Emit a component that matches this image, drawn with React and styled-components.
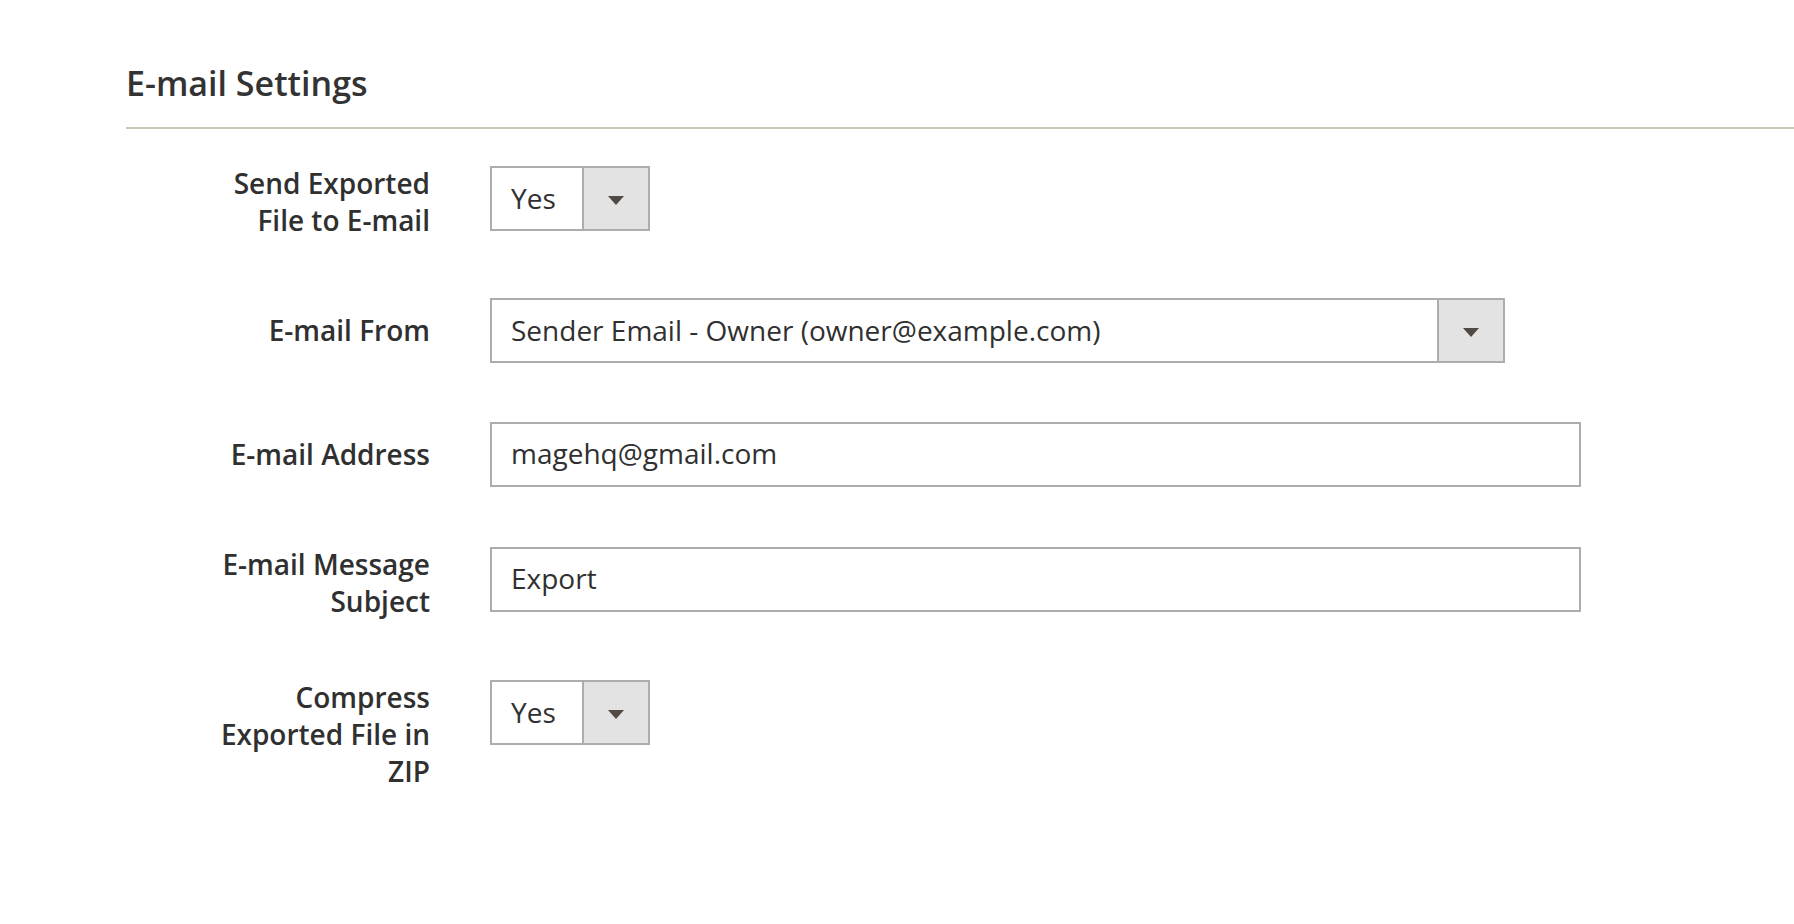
import React from 'react'
import styled, { createGlobalStyle } from 'styled-components'

const GlobalStyle = createGlobalStyle`
  html, body {
    margin: 0;
    padding: 0;
    background: #ffffff;
  }
  body {
    font-family: "Open Sans", "Liberation Sans", Arial, sans-serif;
    color: #303030;
  }
`

const Page = styled.div`
  width: 1794px;
  min-height: 924px;
  box-sizing: border-box;
  padding: 63px 0 0 126px;
`

const Legend = styled.div`
  border-bottom: 2px solid #ccc5b9;
  padding-bottom: 23px;
  margin-bottom: 36px;
`

const Title = styled.h2`
  margin: 0;
  font-size: 34px;
  line-height: 41px;
  font-weight: 600;
  color: #333333;
`

const Fields = styled.div`
  display: flex;
  flex-direction: column;
  gap: 59px;
`

const Row = styled.div`
  display: flex;
  align-items: flex-start;
`

const Label = styled.label`
  width: 240px;
  margin-left: 64px;
  margin-right: 60px;
  padding-top: ${(props) => (props.$single ? '14px' : '0')};
  text-align: right;
  font-size: 28px;
  line-height: 37px;
  font-weight: 600;
  color: #303030;
`

const Control = styled.div`
  padding-top: ${(props) => (props.$single ? '0' : '1px')};
`

const SelectBox = styled.div`
  display: flex;
  width: ${(props) => props.$width}px;
  height: 65px;
  box-sizing: border-box;
  border: 2px solid #adadad;
  background: #ffffff;
`

const SelectValue = styled.div`
  flex: 1;
  display: flex;
  align-items: center;
  padding: 0 19px 2px 19px;
  font-size: 28px;
  color: #303030;
  white-space: nowrap;
`

const SelectArrow = styled.div`
  width: 66px;
  border-left: 2px solid #adadad;
  background: #e3e3e3;
  display: flex;
  align-items: center;
  justify-content: center;
  padding-top: 3px;
  box-sizing: border-box;
`

const TextInput = styled.input`
  display: block;
  width: ${(props) => props.$width}px;
  height: 65px;
  box-sizing: border-box;
  border: 2px solid #adadad;
  border-radius: 0;
  padding: 0 19px 3px 19px;
  margin: 0;
  font-family: "Open Sans", "Liberation Sans", Arial, sans-serif;
  font-size: 28px;
  color: #303030;
  background: #ffffff;
  outline: none;
`

function Arrow() {
  return (
    <svg width="16" height="9" viewBox="0 0 16 9">
      <path d="M0 0 H16 L8 9 Z" fill="#514943" />
    </svg>
  )
}

function Select({ value, width }) {
  return (
    <SelectBox $width={width}>
      <SelectValue>{value}</SelectValue>
      <SelectArrow>
        <Arrow />
      </SelectArrow>
    </SelectBox>
  )
}

export default function App() {
  return (
    <Page>
      <GlobalStyle />
      <Legend>
        <Title>E-mail Settings</Title>
      </Legend>
      <Fields>
        <Row>
          <Label>Send Exported File to E-mail</Label>
          <Control>
            <Select value="Yes" width={160} />
          </Control>
        </Row>
        <Row>
          <Label $single>E-mail From</Label>
          <Control $single>
            <Select value="Sender Email - Owner (owner@example.com)" width={1015} />
          </Control>
        </Row>
        <Row>
          <Label $single>E-mail Address</Label>
          <Control $single>
            <TextInput $width={1091} defaultValue="magehq@gmail.com" />
          </Control>
        </Row>
        <Row>
          <Label>E-mail Message Subject</Label>
          <Control>
            <TextInput $width={1091} defaultValue="Export" />
          </Control>
        </Row>
        <Row>
          <Label>Compress Exported File in ZIP</Label>
          <Control>
            <Select value="Yes" width={160} />
          </Control>
        </Row>
      </Fields>
    </Page>
  )
}
